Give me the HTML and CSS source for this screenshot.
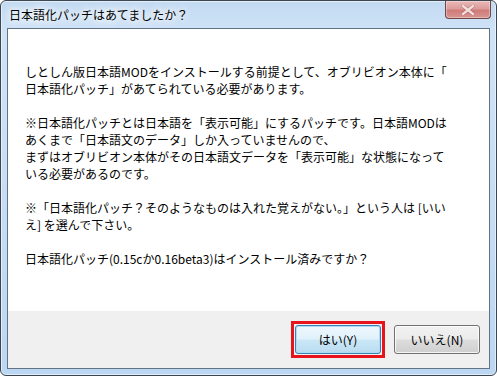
FILE: index.html
```html
<!DOCTYPE html>
<html lang="ja">

<head>
    <meta charset="UTF-8">
    <title>日本語化パッチはあてましたか？</title>
    <link rel="stylesheet" href="styles.css">
</head>

<body>
    <div class="window">
        <div class="titlebar">
            <span class="title">日本語化パッチはあてましたか？</span>
            <div class="close-btn">
                <svg width="14" height="10" viewBox="0 0 14 10">
                    <path d="M2 1 L12 9 M12 1 L2 9" stroke="#7a3434" stroke-width="3.6" stroke-linecap="square" opacity="0.35" />
                    <path d="M2 1 L12 9 M12 1 L2 9" stroke="#f3dede" stroke-width="2.4" stroke-linecap="square" />
                </svg>
            </div>
        </div>

        <div class="client">
            <div class="message">
                <p>しとしん版日本語MODをインストールする前提として、オブリビオン本体に「<br>日本語化パッチ」があてられている必要があります。</p>
                <p>※日本語化パッチとは日本語を「表示可能」にするパッチです。日本語MODは<br>あくまで「日本語文のデータ」しか入っていませんので、<br>まずはオブリビオン本体がその日本語文データを「表示可能」な状態になって<br>いる必要があるのです。</p>
                <p>※「日本語化パッチ？そのようなものは入れた覚えがない。」という人は [いい<br>え] を選んで下さい。</p>
                <p>日本語化パッチ(0.15cか0.16beta3)はインストール済みですか？</p>
            </div>

            <div class="actions">
                <button class="btn btn-default">はい(Y)</button>
                <button class="btn">いいえ(N)</button>
            </div>
        </div>
    </div>
</body>

</html>
```

FILE: styles.css
```css
html,
body {
    margin: 0;
    padding: 0;
    width: 497px;
    height: 376px;
    overflow: hidden;
    background: #fff;
}

body {
    font-family: "Noto Sans CJK JP", "Noto Sans", sans-serif;
    font-size: 12px;
    color: #000;
}

.window {
    box-sizing: border-box;
    width: 497px;
    height: 376px;
    border: 1px solid #3c4650;
    border-radius: 6px;
    background: linear-gradient(180deg, #c2daf2 0%, #cfe3f7 30px, #bcd7f3 100%);
    box-shadow: inset 0 0 0 1px rgba(255, 255, 255, 0.55);
    display: flex;
    flex-direction: column;
}

.titlebar {
    height: 27px;
    display: flex;
    align-items: flex-start;
    flex-shrink: 0;
}

.title {
    padding: 5px 0 0 8px;
    line-height: 17px;
    text-shadow: 0 0 6px #fff, 0 0 10px #fff, 0 0 12px #fff;
}

.close-btn {
    margin-left: auto;
    margin-right: 5px;
    width: 46px;
    height: 18px;
    box-sizing: border-box;
    border: 1px solid #6e4747;
    border-top: none;
    border-radius: 0 0 4px 4px;
    background: linear-gradient(180deg, #e9b8b6 0%, #dc9c9a 45%, #cf7b78 55%, #d89592 100%);
    box-shadow: inset 0 0 0 1px rgba(255, 255, 255, 0.35);
    display: flex;
    align-items: center;
    justify-content: center;
}

.client {
    flex: 1;
    margin: 0 6px 6px;
    border: 1px solid #627384;
    display: flex;
    flex-direction: column;
    background: #fff;
}

.message {
    flex: 1;
    padding: 34px 0 0 17px;
    white-space: nowrap;
}

.message p {
    margin: 0 0 17px;
    line-height: 17px;
}

.actions {
    background: #f0f0f0;
    display: flex;
    justify-content: flex-end;
    align-items: center;
    gap: 13px;
    padding: 14px 9px 14px 0;
}

.btn {
    width: 86px;
    height: 29px;
    padding: 0;
    font-family: inherit;
    font-size: 12px;
    color: #000;
    border: 1px solid #707070;
    border-radius: 3px;
    background: linear-gradient(180deg, #f2f2f2 0%, #ebebeb 49%, #dddddd 51%, #cfcfcf 100%);
    box-shadow: inset 0 0 0 1px rgba(255, 255, 255, 0.8);
}

.btn-default {
    position: relative;
    border-color: #3c7fb1;
    background: linear-gradient(180deg, #eef7fd 0%, #e0f1fb 49%, #cbe7f7 51%, #b9dcf0 100%);
    box-shadow: inset 0 0 0 1px #a9def6;
}

/* red marker drawn over the default button */
.btn-default::after {
    content: "";
    position: absolute;
    top: -5px;
    left: -5px;
    right: -5px;
    bottom: -5px;
    border: 3px solid #e8141c;
}
```
